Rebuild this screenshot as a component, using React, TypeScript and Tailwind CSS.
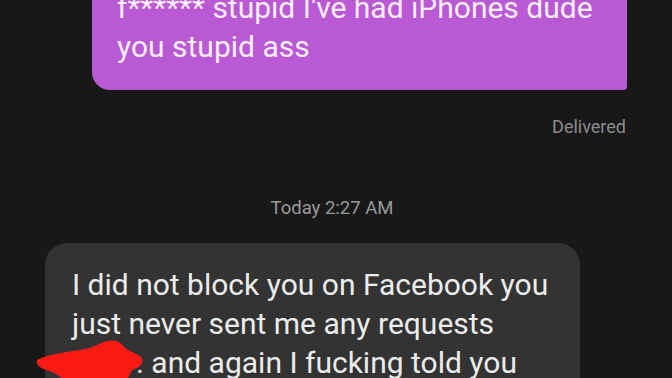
import React from "react";

const Scribble: React.FC = () => (
  <svg
    className="absolute left-[-9px] top-[97px]"
    width="112"
    height="46"
    viewBox="0 0 112 46"
  >
    <path
      d="M1 20 C10 15 30 12 50 9 C60 7 64 2 72 1 C80 0 85 2 87 6 C90 10 100 13 105 17 C108 21 106 27 98 29 C94 31 92 38 90 46 L32 46 C28 38 20 33 10 30 C4 28 0 25 1 20 Z"
      fill="#fb1a14"
    />
  </svg>
);

export default function App() {
  return (
    <div
      className="w-[672px] h-[378px] overflow-hidden bg-[#181818] flex flex-col"
      style={{ fontFamily: "Roboto, 'Noto Sans', sans-serif" }}
    >
      <div className="mt-[-12px] ml-[92px] mr-[45px] bg-[#b95ad4] rounded-bl-[18px] rounded-br-[4px] pl-[25px] pr-4 pb-[24px] text-[30px] leading-[39px] text-[#fbeefe]">
        <div>f****** stupid I've had iPhones dude</div>
        <div>you stupid ass</div>
      </div>

      <div className="mt-[27px] mr-[46px] text-right text-[18px] leading-[20px] text-[#8c8c8c]">
        Delivered
      </div>

      <div className="mt-[61px] text-center pr-[8px] text-[18.5px] leading-[20px] text-[#9a9a9a]">
        Today 2:27 AM
      </div>

      <div className="relative mt-[25px] ml-[45px] w-[535px] bg-[#333333] rounded-[22px] pl-[27px] pr-4 pt-[22px] pb-6 text-[30px] leading-[39px] text-[#ececec]">
        <div>I did not block you on Facebook you</div>
        <div>just never sent me any requests</div>
        <div>
          <span className="inline-block w-[64px]"></span>. and again I fucking told you
        </div>
        <Scribble />
      </div>
    </div>
  );
}
